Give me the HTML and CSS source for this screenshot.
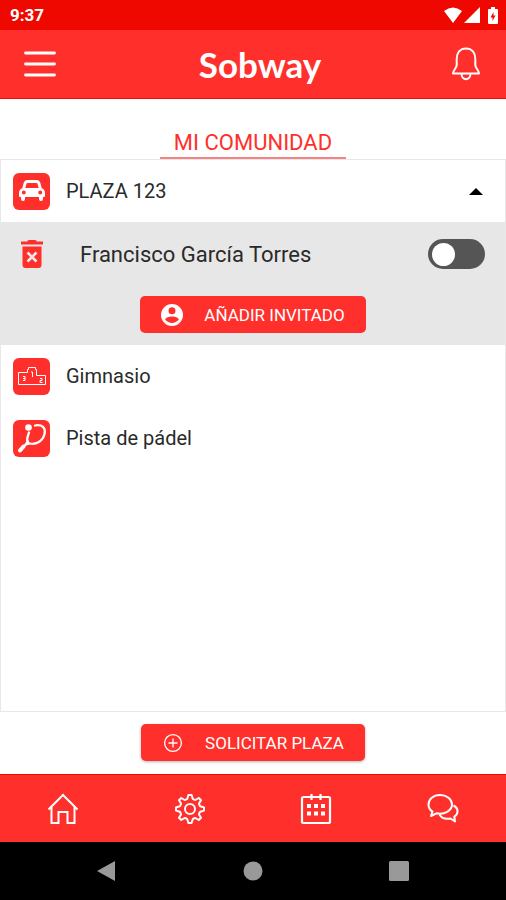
FILE: index.html
```html
<!DOCTYPE html>
<html lang="es">
<head>
<meta charset="utf-8">
<meta name="viewport" content="width=device-width, initial-scale=1">
<title>Sobway</title>
<link rel="stylesheet" href="styles.css">
</head>
<body>
<div class="status-bar">
  <span class="clock">9:37</span>
  <div class="status-icons">
    <svg width="18" height="16" viewBox="0 0 18 16" fill="currentColor"><path d="M0 4Q9-3 18 4L9 16Z"/></svg>
    <svg width="16" height="16" viewBox="0 0 16 16" fill="currentColor"><path d="M16 0V16H0Z"/></svg>
    <svg class="battery" width="10" height="17" viewBox="0 0 10 17"><path fill="currentColor" d="M3 0H7V2H9Q10 2 10 3V16Q10 17 9 17H1Q0 17 0 16V3Q0 2 1 2H3Z"/><path fill="#ee0800" d="M5.500 5V8.500H7.500L4.500 14V10.500H2.500Z"/></svg>
  </div>
</div>

<header class="app-header">
  <button class="icon-button" type="button" aria-label="Menú">
    <svg width="32" height="28" viewBox="0 0 32 28" stroke="currentColor" stroke-width="2.800" stroke-linecap="round"><path d="M1.500 3H30.500M1.500 14H30.500M1.500 25H30.500"/></svg>
  </button>
  <h1 class="brand">Sobway</h1>
  <button class="icon-button" type="button" aria-label="Notificaciones">
    <svg width="28" height="34" viewBox="0 0 28 34" fill="none" stroke="currentColor" stroke-width="2" stroke-linejoin="round"><path d="M14 1.500C8 1.500 4.700 6 4.700 12V18C4.700 21.500 1 23 1 26.500H27C27 23 23.300 21.500 23.300 18V12C23.300 6 20 1.500 14 1.500ZM9.500 26.500C9.500 34 18.500 34 18.500 26.500"/></svg>
  </button>
</header>

<div class="tabs" role="tablist">
  <button class="tab" type="button" role="tab" aria-selected="true">MI COMUNIDAD</button>
</div>

<main class="panel">
  <button class="row" type="button" aria-expanded="true">
    <span class="tile">
      <svg width="28" height="22" viewBox="0 0 28 22"><path fill="currentColor" fill-rule="evenodd" d="M9 0H19Q21.500 0 22.200 2.500L23.700 8Q27 9.500 27 13V16Q27 17 26 17H25V19Q25 21 23 21T21 19V17H7V19Q7 21 5 21T3 19V17H2Q1 17 1 16V13Q1 9.500 4.300 8L5.800 2.500Q6.500 0 9 0ZM9.500 3Q8.700 3 8.400 4L7.300 8H20.700L19.600 4Q19.300 3 18.500 3ZM5.800 10.500A2 2 0 1 0 5.800 14.500A2 2 0 1 0 5.800 10.500ZM22.200 10.500A2 2 0 1 0 22.200 14.500A2 2 0 1 0 22.200 10.500Z"/></svg>
    </span>
    <span class="row-label">PLAZA 123</span>
    <svg class="caret" width="14" height="7" viewBox="0 0 14 7"><path d="M7 0L14 7H0Z"/></svg>
  </button>

  <section class="guests">
    <div class="guest">
      <button class="delete" type="button" aria-label="Eliminar invitado">
        <svg width="22" height="28" viewBox="0 0 22 28"><path fill="currentColor" d="M0 1.500H6L7.500 0H14.500L16 1.500H22V4.500H0ZM1.500 6.500H20.500V25Q20.500 28 17.500 28H4.500Q1.500 28 1.500 25Z"/><path stroke="#f5e8e8" stroke-width="2.600" d="M6.500 12.500L15.500 21.500M15.500 12.500L6.500 21.500"/></svg>
      </button>
      <label class="guest-name" for="guest-access">Francisco García Torres</label>
      <input class="switch" id="guest-access" type="checkbox" role="switch">
    </div>
    <button class="action" type="button">
      <svg width="22" height="22" viewBox="0 0 22 22"><path fill="currentColor" fill-rule="evenodd" d="M11 0A11 11 0 1 0 11 22A11 11 0 1 0 11 0ZM11 3.300A3.500 3.500 0 1 1 11 10.300A3.500 3.500 0 1 1 11 3.300ZM4.200 15.500C5 11.500 17 11.500 17.800 15.500C14.500 20 7.500 20 4.200 15.500Z"/></svg>
      AÑADIR INVITADO
    </button>
  </section>

  <button class="row" type="button">
    <span class="tile">
      <svg width="28" height="20" viewBox="0 0 28 20" fill="none" stroke="currentColor"><path d="M.5 18.500V6.500H9.500V3.500H10.500V1.500H17.500V3.500H18.500V9.500H27.500V18.500ZM5 10.500H7V14.500H5M5 12.500H7M13 6H14.500V11M22 12.500H24V14.500H22V16.500H24.500"/></svg>
    </span>
    <span class="row-label">Gimnasio</span>
  </button>

  <button class="row" type="button">
    <span class="tile">
      <svg width="30" height="30" viewBox="0 0 30 30" fill="none" stroke="currentColor" stroke-linecap="round"><circle cx="11.500" cy="4.500" r="3.300" fill="currentColor" stroke="none"/><path stroke-width="2.300" d="M18 2.500C25 1 29 5 27.500 11C26 18 19 22 12.500 20.500C8.500 19.500 10.500 14 12 9.500"/><path stroke-width="1.800" d="M11 18L7.500 22.500M12.500 20.500L7.500 22.500"/><path stroke-width="4" d="M6.500 23.500L3 27.500"/></svg>
    </span>
    <span class="row-label">Pista de pádel</span>
  </button>
</main>

<div class="request">
  <button class="action raised" type="button">
    <svg width="22" height="22" viewBox="0 0 22 22" fill="none" stroke="currentColor" stroke-width="1.300"><circle cx="11" cy="11" r="8.400"/><path d="M11 6.500V15.500M6.500 11H15.500"/></svg>
    SOLICITAR PLAZA
  </button>
</div>

<nav class="tab-bar" aria-label="Principal">
  <a class="tab-link" href="#inicio" aria-label="Inicio">
    <svg width="32" height="32" viewBox="0 0 32 32" fill="none" stroke="currentColor" stroke-width="2"><path d="M1.500 16.500L16 2L30.500 16.500M4.500 14V30H11.500V19H20.500V30H27.500V14"/></svg>
  </a>
  <a class="tab-link" href="#ajustes" aria-label="Ajustes">
    <svg width="32" height="32" viewBox="-16 -16 32 32" fill="none" stroke="currentColor" stroke-width="2" stroke-linejoin="round"><path d="M-2.700-10.200L-1.600-14H1.600L2.700-10.200Q4-9 5.400-9L8.800-11L11-8.800L9-5.400Q9-4 10.200-2.700L14-1.600V1.600L10.200 2.700Q9 4 9 5.400L11 8.800L8.800 11L5.400 9Q4 9 2.700 10.200L1.600 14H-1.600L-2.700 10.200Q-4 9-5.400 9L-8.800 11L-11 8.800L-9 5.400Q-9 4-10.200 2.700L-14 1.600V-1.600L-10.200-2.700Q-9-4-9-5.400L-11-8.800L-8.800-11L-5.400-9Q-4-9-2.700-10.200Z"/><circle r="5"/></svg>
  </a>
  <a class="tab-link" href="#reservas" aria-label="Reservas">
    <svg width="32" height="32" viewBox="0 0 32 32"><path fill="none" stroke="currentColor" stroke-width="2.200" d="M3.500 4H28.500Q30 4 30 5.500V28.500Q30 30 28.500 30H3.500Q2 30 2 28.500V5.500Q2 4 3.500 4ZM11.500 1V7M20.500 1V7"/><path fill="currentColor" d="M7 11H11V15H7ZM14 11H18V15H14ZM21 11H25V15H21ZM7 18.500H11V22.500H7ZM14 18.500H18V22.500H14ZM21 18.500H25V22.500H21Z"/></svg>
  </a>
  <a class="tab-link" href="#mensajes" aria-label="Mensajes">
    <svg width="32" height="32" viewBox="0 0 32 32" fill="none" stroke="currentColor" stroke-width="2" stroke-linejoin="round"><path d="M13 2C6.500 2 1.500 6 1.500 11.500C1.500 14.500 3 17 5.500 18.700L4 23L9.500 20.300C17.500 22 25 17.500 25 11.500C25 6 19.500 2 13 2ZM26.500 12.500C32 15.500 31.500 21 27.300 23.500L28 28.500L23.500 25.500C18.500 26.500 14.500 25 12.500 21.500"/></svg>
  </a>
</nav>

<div class="system-bar">
  <svg width="20" height="22" viewBox="0 0 20 22" fill="currentColor"><path d="M19 1V21L1 11Z"/></svg>
  <svg width="20" height="20" viewBox="0 0 20 20" fill="currentColor"><circle cx="10" cy="10" r="9.500"/></svg>
  <svg width="20" height="20" viewBox="0 0 20 20" fill="currentColor"><rect width="20" height="20" rx="1.500"/></svg>
</div>
</body>
</html>
```
FILE: styles.css
```css
:root {
  --red: #ff302c;
  --red-dark: #ee0800;
  --line: #e8e8e8;
}

* {
  box-sizing: border-box;
}

body {
  display: flex;
  flex-direction: column;
  min-height: 100vh;
  margin: 0;
  background: #fff;
  color: #2a2a2a;
  font-family: Roboto, sans-serif;
}

button {
  margin: 0;
  padding: 0;
  border: 0;
  background: none;
  color: inherit;
  font: inherit;
  cursor: pointer;
}

svg {
  display: block;
  flex: none;
}

.status-bar {
  display: flex;
  align-items: center;
  justify-content: space-between;
  height: 30px;
  padding: 0 8px 0 10px;
  background: var(--red-dark);
  color: #fff;
}

.clock {
  font-size: 17px;
  font-weight: 700;
}

.status-icons {
  display: flex;
  align-items: center;
  gap: 2px;
}

.battery {
  margin-left: 6px;
}

.app-header {
  display: flex;
  align-items: center;
  justify-content: space-between;
  height: 69px;
  padding: 0 24px;
  border-bottom: 1px solid var(--red-dark);
  background: var(--red);
  color: #fff;
}

.icon-button {
  display: flex;
  width: 32px;
  justify-content: center;
}

.brand {
  margin: 0;
  padding-left: 14px;
  font-family: Lato, sans-serif;
  font-size: 35px;
  font-weight: 700;
  line-height: 40px;
}

.tabs {
  display: flex;
  justify-content: center;
  align-items: flex-end;
  height: 60px;
}

.tab {
  padding: 0 14px;
  border-bottom: 2px solid #f58383;
  color: var(--red);
  font-size: 22px;
  line-height: 28px;
}

.panel {
  flex: 1;
  border: 1px solid var(--line);
}

.row {
  display: flex;
  align-items: center;
  gap: 16px;
  width: 100%;
  height: 62px;
  padding: 0 22px 0 12px;
  text-align: left;
}

.tile {
  display: flex;
  align-items: center;
  justify-content: center;
  width: 37px;
  height: 37px;
  border-radius: 6px;
  background: var(--red);
  color: #fff;
}

.row-label {
  flex: 1;
  font-size: 20px;
}

.guests {
  padding-bottom: 12px;
  background: #e7e7e7;
}

.guest {
  display: flex;
  align-items: center;
  height: 64px;
  padding: 0 20px;
}

.delete {
  color: var(--red);
}

.guest-name {
  flex: 1;
  padding-left: 37px;
  font-size: 22px;
}

.switch {
  display: flex;
  align-items: center;
  width: 57px;
  height: 30px;
  margin: 0;
  padding: 0 4px;
  border-radius: 15px;
  background: #555;
  appearance: none;
}

.switch::before {
  width: 23px;
  height: 23px;
  border-radius: 50%;
  background: #fff;
  content: "";
}

.switch:checked {
  justify-content: flex-end;
  background: var(--red);
}

.action {
  display: flex;
  align-items: center;
  gap: 21px;
  height: 37px;
  margin: 10px auto 0;
  padding: 0 21px;
  border-radius: 5px;
  background: var(--red);
  color: #fff;
  font-size: 17px;
}

.request {
  height: 62px;
  padding-top: 12px;
}

.raised {
  margin-top: 0;
  box-shadow: 0 1px 3px rgba(0, 0, 0, 0.3);
}

.tab-bar {
  display: grid;
  grid-template-columns: repeat(4, 1fr);
  height: 68px;
  border-top: 1px solid var(--red-dark);
  background: var(--red);
}

.tab-link {
  display: flex;
  align-items: center;
  justify-content: center;
  color: #fff;
}

.system-bar {
  display: flex;
  align-items: center;
  justify-content: space-between;
  height: 58px;
  padding: 0 97px 0 96px;
  background: #000;
  color: #999;
}
```
